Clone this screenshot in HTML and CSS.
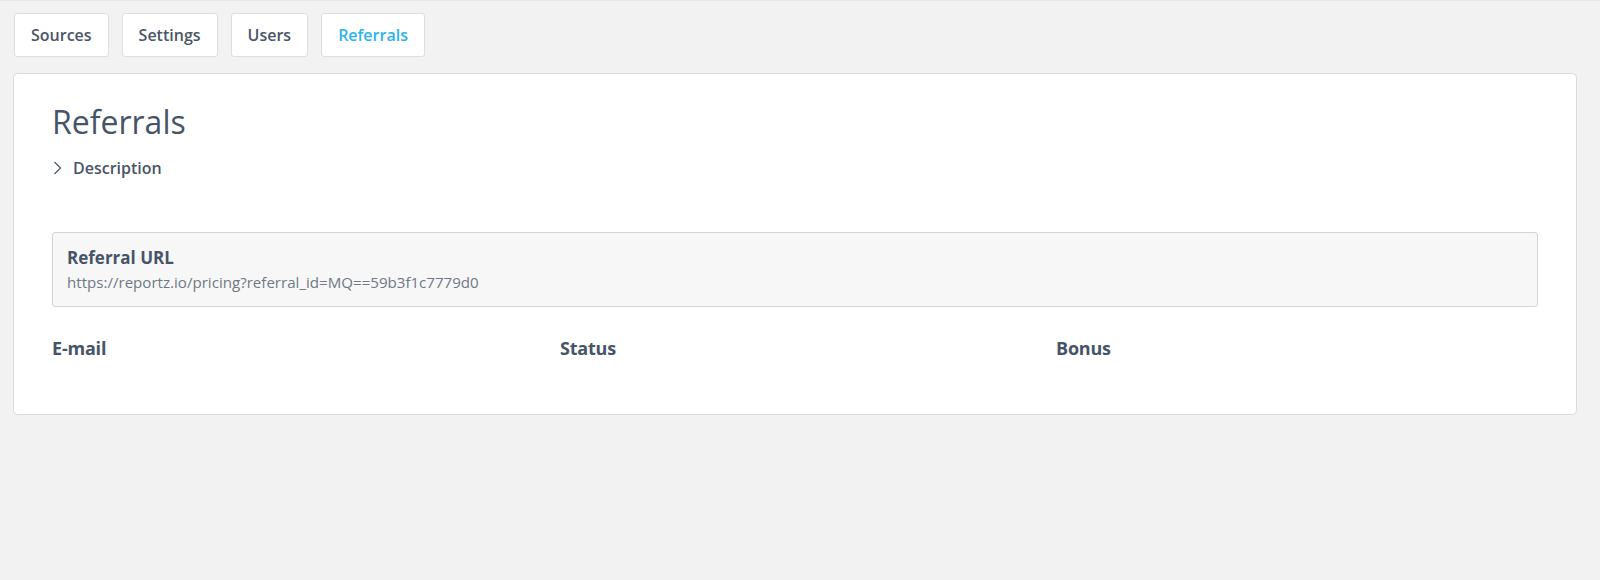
FILE: index.html
```html
<!DOCTYPE html>
<html lang="en">
<head>
<meta charset="utf-8">
<title>Referrals</title>
<link rel="stylesheet" href="styles.css">
</head>
<body>
<div class="page">
  <nav class="tabs">
    <a class="tab">Sources</a>
    <a class="tab">Settings</a>
    <a class="tab">Users</a>
    <a class="tab tab-active">Referrals</a>
  </nav>
  <section class="card">
    <h1 class="title">Referrals</h1>
    <div class="desc">
      <svg class="chev" width="11" height="14" viewBox="0 0 11 14"><path d="M2.5 1 L8.5 7 L2.5 13" fill="none" stroke="#4a5568" stroke-width="1.2"/></svg>
      <span>Description</span>
    </div>
    <div class="url-box">
      <div class="url-label">Referral URL</div>
      <div class="url-value">https://reportz.io/pricing?referral_id=MQ==59b3f1c7779d0</div>
    </div>
    <div class="table-head">
      <div class="th">E-mail</div>
      <div class="th">Status</div>
      <div class="th">Bonus</div>
    </div>
  </section>
</div>
</body>
</html>
```
FILE: styles.css
```css
html, body {
  margin: 0;
  padding: 0;
  background: #f2f2f2;
  font-family: "Open Sans", "Noto Sans", sans-serif;
  color: #475467;
}
.page {
  border-top: 1px solid #e6e6e6;
  padding: 12px 23px 0 13px;
}
.tabs {
  display: flex;
  gap: 13px;
  padding-left: 1px;
}
.tab {
  display: block;
  background: #fff;
  border: 1px solid #dedede;
  border-radius: 3px;
  padding: 11px 16px;
  font-size: 16px;
  font-weight: 600;
  line-height: 20px;
  color: #4a5568;
}
.tab-active {
  color: #2ab3ee;
}
.card {
  margin-top: 16px;
  background: #fff;
  border: 1px solid #dcdcdc;
  border-radius: 5px;
  padding: 28px 38px 54px;
}
.title {
  margin: 0;
  font-size: 32px;
  font-weight: 400;
  line-height: 40px;
  color: #475467;
}
.desc {
  display: flex;
  align-items: center;
  gap: 10px;
  margin-top: 16px;
  font-size: 16px;
  font-weight: 600;
  line-height: 20px;
  color: #4a5568;
}
.chev {
  display: block;
}
.url-box {
  margin-top: 54px;
  background: #f7f7f7;
  border: 1px solid #d4d4d4;
  border-radius: 3px;
  padding: 12px 14px 12px;
}
.url-label {
  font-size: 17px;
  font-weight: 700;
  line-height: 25px;
  color: #475467;
}
.url-value {
  font-size: 15.1px;
  line-height: 24px;
  color: #707885;
}
.table-head {
  display: grid;
  grid-template-columns: 508px 496px 1fr;
  margin-top: 29px;
}
.th {
  font-size: 18px;
  font-weight: 700;
  line-height: 24px;
  color: #475467;
  letter-spacing: -0.2px;
}
```
